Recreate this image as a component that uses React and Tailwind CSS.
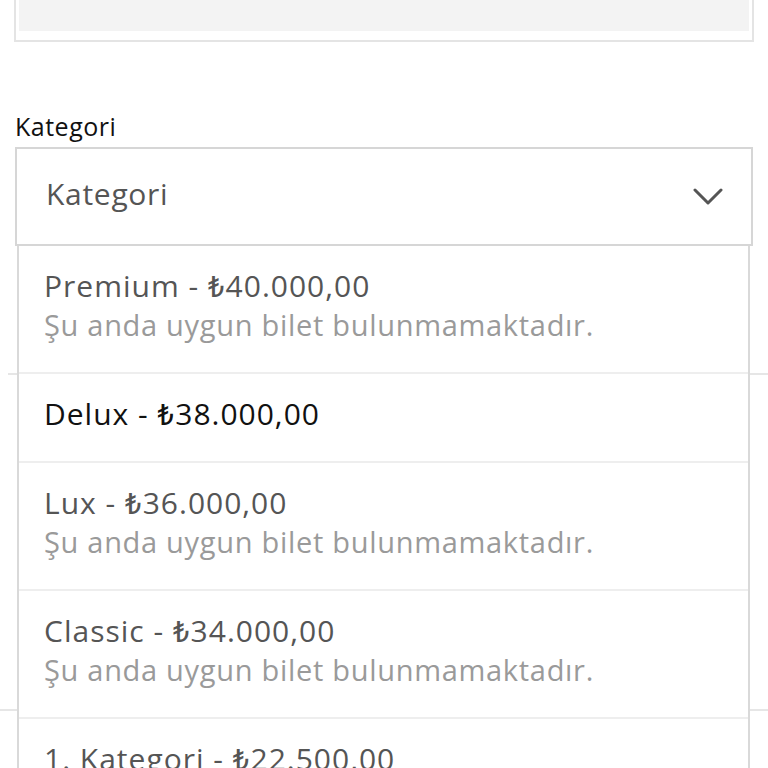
import React from "react";

const items = [
  { title: "Premium - ₺40.000,00", note: "Şu anda uygun bilet bulunmamaktadır." },
  { title: "Delux - ₺38.000,00", active: true },
  { title: "Lux - ₺36.000,00", note: "Şu anda uygun bilet bulunmamaktadır." },
  { title: "Classic - ₺34.000,00", note: "Şu anda uygun bilet bulunmamaktadır." },
  { title: "1. Kategori - ₺22.500,00" },
];

export default function App() {
  return (
    <div
      className="relative h-[768px] w-[768px] overflow-hidden bg-white"
      style={{ fontFamily: "'Open Sans', Roboto, sans-serif" }}
    >
      {/* previous field */}
      <div className="mx-[14px] h-[42px] border-x-2 border-b-2 border-[#e4e4e4] px-[3px]">
        <div className="h-[31px] bg-[#f3f3f3]" />
      </div>

      {/* category */}
      <div className="px-[15px] pt-[69px]">
        <label className="block text-[25px] leading-[30px] tracking-[0.5px] text-[#111]">Kategori</label>
        <div className="mt-[6px] flex h-[99px] items-center justify-between border-2 border-[#d6d6d6] pb-[6px] pl-[29px] pr-[28px]">
          <span className="text-[30px] leading-[36px] tracking-[0.7px] text-[#555]">Kategori</span>
          <svg width="30" height="18" viewBox="0 0 30 18" fill="none" className="mt-[6px]">
            <path d="M2 2 L15 15 L28 2" stroke="#555" strokeWidth="3" strokeLinecap="round" strokeLinejoin="round" />
          </svg>
        </div>
      </div>

      {/* background form lines */}
      <div className="ml-[8px] mt-[127px] border-t-2 border-[#e6e6e6]" />
      <div className="mt-[334px] border-t-2 border-[#e6e6e6]" />

      {/* dropdown */}
      <div className="absolute left-[17px] top-[246px] w-[733px] border-x-2 border-[#d9d9d9] bg-white">
        {items.map((it, i) => (
          <div
            key={i}
            className={`px-[25px] pt-[20px] pb-[28px] ${i > 0 ? "border-t-2 border-[#eeeeee]" : ""}`}
          >
            <div
              className={`whitespace-nowrap text-[30px] leading-[39px] tracking-[1px] ${it.active ? "text-[#111]" : "text-[#555]"}`}
            >
              {it.title}
            </div>
            {it.note && (
              <div className="whitespace-nowrap text-[29px] leading-[39px] tracking-[0.7px] text-[#9a9a9a]">
                {it.note}
              </div>
            )}
          </div>
        ))}
      </div>
    </div>
  );
}
